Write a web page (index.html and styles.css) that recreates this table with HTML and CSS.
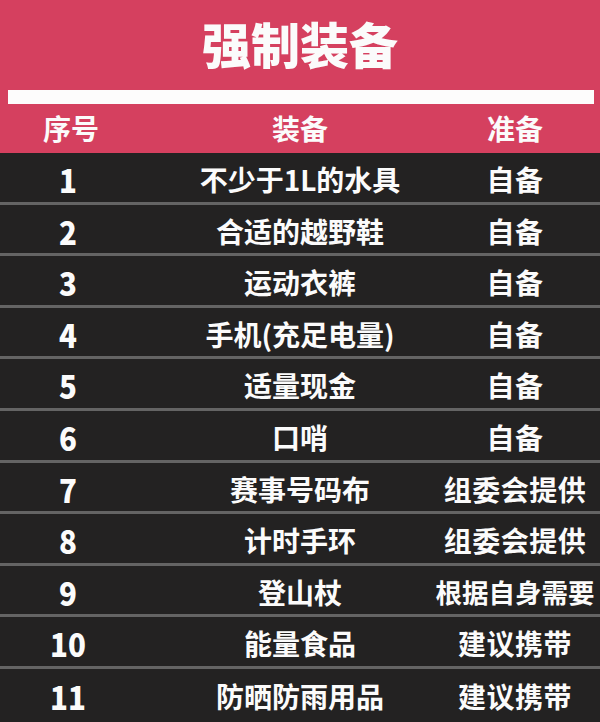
FILE: index.html
```html
<!DOCTYPE html>
<html lang="zh-CN">
<head>
<meta charset="utf-8">
<link rel="stylesheet" href="styles.css">
</head>
<body>
<div class="page">
  <header class="head">
    <h1 class="title">强制装备</h1>
    <div class="bar"></div>
    <div class="row colhead">
      <div class="c1">序号</div>
      <div class="c2">装备</div>
      <div class="c3">准备</div>
    </div>
  </header>
  <div class="table">
    <div class="row item"><div class="c1 num">1</div><div class="c2">不少于1L的水具</div><div class="c3">自备</div></div>
    <div class="row item"><div class="c1 num">2</div><div class="c2">合适的越野鞋</div><div class="c3">自备</div></div>
    <div class="row item"><div class="c1 num">3</div><div class="c2">运动衣裤</div><div class="c3">自备</div></div>
    <div class="row item"><div class="c1 num">4</div><div class="c2">手机(充足电量)</div><div class="c3">自备</div></div>
    <div class="row item"><div class="c1 num">5</div><div class="c2">适量现金</div><div class="c3">自备</div></div>
    <div class="row item"><div class="c1 num">6</div><div class="c2">口哨</div><div class="c3">自备</div></div>
    <div class="row item"><div class="c1 num">7</div><div class="c2">赛事号码布</div><div class="c3">组委会提供</div></div>
    <div class="row item"><div class="c1 num">8</div><div class="c2">计时手环</div><div class="c3">组委会提供</div></div>
    <div class="row item"><div class="c1 num">9</div><div class="c2">登山杖</div><div class="c3 small">根据自身需要</div></div>
    <div class="row item"><div class="c1 num">10</div><div class="c2">能量食品</div><div class="c3">建议携带</div></div>
    <div class="row item"><div class="c1 num">11</div><div class="c2">防晒防雨用品</div><div class="c3">建议携带</div></div>
  </div>
</div>
</body>
</html>
```

FILE: styles.css
```css
* { box-sizing: border-box; margin: 0; padding: 0; }
html, body { width: 600px; height: 722px; overflow: hidden; background: #232222; }
body { font-family: "Noto Sans CJK SC", "Noto Sans", sans-serif; color: #fbfbfb; }
.page { width: 600px; }
.head { background: #d5405f; height: 153px; display: flex; flex-direction: column; }
.title {
  height: 90px;
  font-size: 49px;
  font-weight: 900;
  line-height: 86px;
  text-align: center;
}
.bar { height: 14px; margin: 0 6px 0 8px; background: #fdfcfc; }
.row {
  display: grid;
  grid-template-columns: 136px 1fr 170px;
  align-items: center;
  text-align: center;
}
.colhead { flex: 1; font-size: 28px; font-weight: 700; padding-bottom: 2px; }
.colhead .c1 { padding-left: 6px; }
.c2 { padding-left: 34px; }
.table { display: flex; flex-direction: column; }
.item {
  height: 51.6px;
  border-bottom: 3px solid #646464;
  font-size: 28px;
  font-weight: 700;
  padding-top: 3px;
}
.item:last-child { border-bottom: none; }
.num { font-size: 32px; font-weight: 900; transform: scaleX(0.92); }
.item .c3 { letter-spacing: 0.5px; }
.item .small { font-size: 26.5px; letter-spacing: 0; }
```
